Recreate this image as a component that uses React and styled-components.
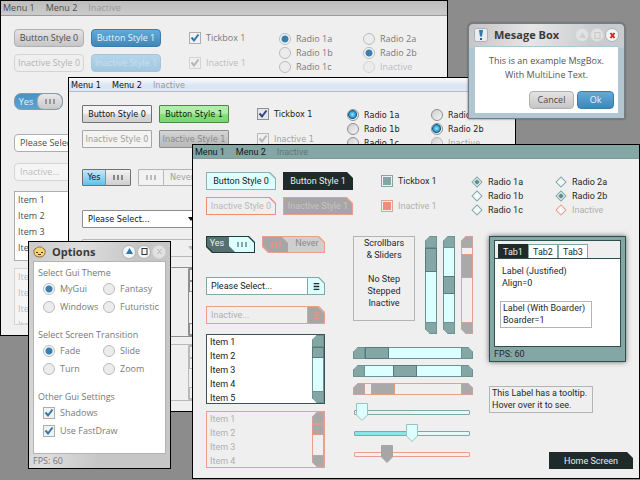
import React from "react";
import styled, { createGlobalStyle, css, ThemeProvider } from "styled-components";

const GlobalStyle = createGlobalStyle`
  *, *::before, *::after { box-sizing: border-box; }
  body { margin: 0; background: #8c8c8c; }
  button, input, select { font: inherit; color: inherit; margin: 0; padding: 0; }
  ul { list-style: none; margin: 0; padding: 0; }
  p { margin: 0; }
`;

/* ---------- themes ---------- */

const myGui = {
  name: "mygui",
  font: '"Open Sans", "Noto Sans", sans-serif',
  radius: "4px",
  rowHeight: "16px",
  menuHeight: "15px",
  menu: "linear-gradient(#bdbdbd, #cbcbcb)",
  menuLine: "#9b9b9b",
  menuText: "#4c4c4c",
  page: "#efefef",
  text: "#7a7a7a",
  strong: "#4c4c4c",
  muted: "#bdbdbd",
  menuMuted: "#999",
  line: "#adadad",
  mutedLine: "#d4d4d4",
  button: { fill: "linear-gradient(#e4e4e4, #c6c6c6)", line: "#b0b0b0", text: "#4c4c4c" },
  buttonOff: { fill: "#efefef", line: "#d4d4d4", text: "#b4b4b4" },
  accent: { fill: "linear-gradient(#62aad8, #3f87ba)", line: "#3b7cab", text: "#e8f4fc" },
  accentOff: { fill: "linear-gradient(#b4d5ea, #a2c8e0)", line: "#a4c6dc", text: "#c8dfee" },
  toggle: { fill: "linear-gradient(#4b92c4, #5aa3d3)", line: "#8c9aa4", text: "#e8f4fc" },
  knob: { fill: "linear-gradient(#e8e8e8, #c9c9c9)", grip: "#999" },
  toggleOff: { fill: "#efefef", line: "#d4d4d4", text: "#bdbdbd" },
  knobOff: { fill: "#efefef", grip: "#ccc" },
  mark: "#2f78ab",
  tickFill: "#f2f2f2",
  radioFill: "#ececec",
  radioOn: "radial-gradient(circle, #3a80ad 0 3px, #f4f7fa 4px)",
  radioLine: "#b7bcc0",
  bar: "#c9c9c9",
  track: "#efefef",
  list: "#fff",
  listOff: "#f5f5f5",
};

const windowsGui = {
  ...myGui,
  name: "windows",
  font: '"DejaVu Sans Condensed", "Noto Sans", sans-serif',
  radius: "1px",
  menuHeight: "14px",
  menu: "linear-gradient(#fbfcfe, #dbe4f3 60%, #dfe8f5)",
  menuLine: "#b4bccb",
  menuText: "#111",
  text: "#222",
  strong: "#111",
  muted: "#a3a3a3",
  line: "#8e8e8e",
  mutedLine: "#b9b9b9",
  button: { fill: "linear-gradient(#f4f4f4 45%, #dadada 55%, #d0d0d0)", line: "#707070", text: "#111" },
  buttonOff: { fill: "#f3f3f3", line: "#a5a5a5", text: "#a0a0a0" },
  accent: { fill: "linear-gradient(#b0ecaa 45%, #83df7c 55%, #78d871)", line: "#4d8749", text: "#102010" },
  accentOff: { fill: "linear-gradient(#d4d4d4, #b8b8b8)", line: "#8e8e8e", text: "#8a8a8a" },
  toggle: { fill: "linear-gradient(#c3e9f9, #65bfe8)", line: "#707070", text: "#111" },
  knob: { fill: "linear-gradient(#f2f2f2, #cfcfcf)", grip: "#888" },
  toggleOff: { fill: "#f0f0f0", line: "#b4b4b4", text: "#a0a0a0" },
  knobOff: { fill: "#f2f2f2", grip: "#bbb" },
  mark: "#34427c",
  tickFill: "#e4e6ee",
  radioFill: "linear-gradient(135deg, #cfcfcf, #f4f4f4)",
  radioOn: "radial-gradient(circle at 45% 45%, #9fe0fb 0, #2aa0d8 3px, #14547c 4px, #eef2f5 5px)",
  radioLine: "#8e8f8f",
  bar: "#efefef",
  list: "#efefef",
  listOff: "#efefef",
};

const futuristic = {
  name: "futuristic",
  cut: true,
  font: 'Roboto, "Liberation Sans", sans-serif',
  radius: "0",
  rowHeight: "14px",
  menuHeight: "14px",
  menu: "#84a7a5",
  menuLine: "#7d9d9b",
  menuText: "#101818",
  page: "#efefef",
  text: "#222a2a",
  strong: "#151c1c",
  muted: "#b0b0b0",
  menuMuted: "#5f7877",
  line: "#84a7a5",
  mutedLine: "#eb9f8b",
  button: { fill: "#dcffff", line: "#8fb0ae", text: "#151c1c" },
  buttonOff: { fill: "#efefef", line: "#eb8f78", text: "#b9b9b9" },
  accent: { fill: "#1f2a2a", line: "#1f2a2a", text: "#e4eeee" },
  accentOff: { fill: "#a6a6a6", line: "#eb9f8b", text: "#c8c2c0" },
  toggle: { fill: "#55706f", line: "#1f3a3a", text: "#e0f4f4" },
  knob: { fill: "#dcffff", grip: "#84a7a5" },
  toggleOff: { fill: "#cfcfcf", line: "#eb9f8b", text: "#8a8a8a" },
  knobOff: { fill: "#a6a6a6", grip: "#e89480" },
  mark: "#84a7a5",
  tickFill: "#dcffff",
  radioFill: "#f2fafa",
  radioOn: "linear-gradient(#5f8b89, #5f8b89) center / 4px 4px no-repeat, #e4f6f6",
  radioLine: "#84a7a5",
  bar: "#84a7a5",
  track: "#dcffff",
  list: "#fff",
  listOff: "#efefef",
};

/* Octagon outline whose four corners can each be bevelled by a given size. */
const bevel = ([tl, tr, br, bl]) =>
  `polygon(${tl}px 0, calc(100% - ${tr}px) 0, 100% ${tr}px, 100% calc(100% - ${br}px),
   calc(100% - ${br}px) 100%, ${bl}px 100%, 0 calc(100% - ${bl}px), 0 ${tl}px)`;

/* Bordered surface: rounded in the soft themes, bevelled in the futuristic one. */
const surface = ({ fill, line }, theme, corners = [0, 6, 0, 0]) =>
  theme.cut
    ? css`
        border: 0;
        position: relative;
        isolation: isolate;
        background: ${line};
        clip-path: ${bevel(corners)};
        &::before {
          content: "";
          position: absolute;
          inset: 1px;
          z-index: -1;
          background: ${fill};
          clip-path: ${bevel(corners)};
        }
      `
    : css`
        border: 1px solid ${line};
        border-radius: ${theme.radius};
        background: ${fill};
      `;

/* ---------- desktop and windows ---------- */

const Desktop = styled.main`
  position: relative;
  min-height: 100vh;
  overflow: hidden;
  background: #8c8c8c;
`;

const Placed = styled.section`
  position: absolute;
  left: ${(p) => p.$x}px;
  top: ${(p) => p.$y}px;
`;

const Screen = styled(Placed)`
  width: 448px;
  border: 1px solid #000;
  background: ${(p) => p.theme.page};
  color: ${(p) => p.theme.text};
  font: 9px/14px ${(p) => p.theme.font};
`;

const MenuBar = styled.nav`
  display: flex;
  align-items: center;
  gap: 11px;
  height: ${(p) => p.theme.menuHeight};
  padding: 0 2px;
  background: ${(p) => p.theme.menu};
  border-bottom: 1px solid ${(p) => p.theme.menuLine};
`;

const MenuItem = styled.button`
  border: 0;
  background: none;
  line-height: 12px;
  color: ${(p) => p.theme.menuText};
  &:disabled { color: ${(p) => p.theme.menuMuted}; }
`;

const Page = styled.div`
  padding: 13px 6px 9px 13px;
`;

const Choices = styled.div`
  display: flex;
  gap: 28px;
  margin-bottom: 19px;
`;

const ButtonGrid = styled.div`
  display: grid;
  grid-template-columns: 70px 70px;
  grid-auto-rows: 18px;
  gap: 7px;
`;

const TickColumn = styled.div`
  display: grid;
  grid-auto-rows: 18px;
  gap: 7px;
  width: 63px;
  white-space: nowrap;
`;

const RadioColumns = styled.div`
  display: grid;
  grid-template-columns: 84px 78px;
  grid-template-rows: repeat(3, 14px);
  grid-auto-flow: column;
  padding-top: 3px;
`;

const Button = styled.button`
  ${(p) => surface(p.theme[p.$kind || "button"], p.theme)}
  color: ${(p) => p.theme[p.$kind || "button"].text};
  white-space: nowrap;
  line-height: 14px;
  text-align: center;
`;

const Field = styled.label`
  display: flex;
  align-items: center;
  gap: 5px;
  color: ${(p) => (p.$off ? p.theme.muted : p.theme.text)};
`;

const drawing = (width, height, shape) =>
  `url("data:image/svg+xml,${encodeURIComponent(
    `<svg xmlns='http://www.w3.org/2000/svg' viewBox='0 0 ${width} ${height}'>${shape}</svg>`
  )}")`;

const tickMark = (colour) =>
  drawing(12, 12, `<path d='M2.5 5.5 5 8.5 9.5 2.5' fill='none' stroke='${colour}' stroke-width='2'/>`);

const thumb = (fill, line) =>
  drawing(12, 18, `<path d='M.5 .5h11v11.500l-5.500 5.500-5.500-5.500z' fill='${fill}' stroke='${line}'/>`);

const Tick = styled.input.attrs({ type: "checkbox" })`
  appearance: none;
  flex: none;
  width: 12px;
  height: 12px;
  border: 1px solid ${(p) => (p.disabled ? p.theme.mutedLine : p.theme.line)};
  background: ${(p) => p.theme.tickFill};
  &:checked {
    ${(p) =>
      p.theme.cut
        ? css`
            background: ${p.disabled ? "#ec8f78" : p.theme.mark} content-box;
            padding: 1px;
          `
        : css`
            background: ${tickMark(p.disabled ? "#b5b5b5" : p.theme.mark)} center / 12px 12px no-repeat
              ${p.disabled ? "#efefef" : p.theme.tickFill};
          `}
  }
`;

const Radio = styled.input.attrs({ type: "radio" })`
  appearance: none;
  flex: none;
  width: 12px;
  height: 12px;
  border: 1px solid ${(p) => (p.disabled ? p.theme.mutedLine : p.theme.radioLine)};
  border-radius: 50%;
  background: ${(p) => p.theme.radioFill};
  &:checked { background: ${(p) => p.theme.radioOn}; }
  ${(p) =>
    p.theme.cut &&
    css`
      width: 8px;
      height: 8px;
      margin: 2px;
      border-radius: 0;
      transform: rotate(45deg);
    `}
`;

/* ---------- lower half of a screen ---------- */

const Lower = styled.div`
  display: flex;
  align-items: flex-start;
`;

const Inputs = styled.div`
  display: flex;
  flex-direction: column;
  width: 119px;
  margin-right: 28px;
  padding-bottom: 1px;
`;

const Toggles = styled.div`
  display: flex;
  gap: 7px;
  margin-bottom: 24px;
`;

const Toggle = styled.button`
  display: flex;
  align-items: stretch;
  width: ${(p) => (p.$left ? 63 : 49)}px;
  height: 17px;
  ${(p) => surface(p.theme[p.$left ? "toggleOff" : "toggle"], p.theme, [0, 6, 0, 6])}
  ${(p) => p.theme.name === "mygui" && "border-radius: 7px; overflow: hidden;"}
  color: ${(p) => p.theme[p.$left ? "toggleOff" : "toggle"].text};
  > span { flex: 1; text-align: center; line-height: 15px; }
`;

const Knob = styled.i`
  display: flex;
  justify-content: center;
  align-items: center;
  gap: 2px;
  width: 25px;
  background: ${(p) => p.theme[p.$off ? "knobOff" : "knob"].fill};
  ${(p) =>
    p.theme.cut
      ? css`
          margin: 1px;
          clip-path: ${bevel([0, 6, 0, 6])};
        `
      : css`
          border: 0 solid ${p.$off ? p.theme.mutedLine : p.theme.line};
          border-width: ${p.$off ? "0 1px 0 0" : "0 0 0 1px"};
          border-radius: ${p.theme.name === "mygui" ? "6px" : "0"};
        `}
  &::before, &::after, b {
    content: "";
    width: 2px;
    height: 5px;
    background: ${(p) => p.theme[p.$off ? "knobOff" : "knob"].grip};
  }
`;

const Picker = styled.div`
  display: flex;
  align-items: stretch;
  height: 18px;
  margin-bottom: ${(p) => (p.$off ? 10 : 11)}px;
  ${(p) =>
    surface(
      { fill: p.$off ? p.theme.listOff : "#fff", line: p.$off ? p.theme.mutedLine : p.theme.line },
      p.theme
    )}
  color: ${(p) => (p.$off ? p.theme.muted : p.theme.strong)};
  > select {
    appearance: none;
    flex: 1;
    min-width: 0;
    border: 0;
    padding: 0 5px;
    background: none;
    color: inherit;
    opacity: 1;
  }
  > svg {
    width: 17px;
    height: 16px;
    ${(p) =>
      p.theme.cut &&
      css`
        margin: 1px;
        border-left: 1px solid ${p.$off ? p.theme.mutedLine : p.theme.line};
        background: ${p.$off ? "#a6a6a6" : p.theme.track};
        clip-path: ${bevel([0, 6, 0, 0])};
      `}
  }
`;

const ListBox = styled.div`
  display: flex;
  height: ${(p) => (p.$off ? 57 : 70)}px;
  margin-bottom: ${(p) => (p.$off ? 0 : 7)}px;
  overflow: hidden;
  border: 1px solid ${(p) => (p.$off ? p.theme.mutedLine : p.theme.cut ? "#3c5554" : p.theme.line)};
  background: ${(p) => (p.$off ? p.theme.listOff : p.theme.list)};
  color: ${(p) => (p.$off ? p.theme.muted : p.theme.strong)};
  ul { flex: 1; padding-left: 3px; }
  li { line-height: ${(p) => p.theme.rowHeight}; }
`;

/* Scroll bar: end caps with one bevelled corner, a track and a handle. */
const Bar = styled.div`
  display: flex;
  flex-direction: ${(p) => (p.$across ? "row" : "column")};
  flex: none;
  ${(p) => (p.$across ? "height: 12px;" : "width: 12px;")}
  ${(p) => p.$length && `${p.$across ? "width" : "height"}: ${p.$length}px;`}
  ${(p) =>
    surface(
      { fill: p.$off ? p.theme.page : p.theme.track, line: p.$off ? p.theme.mutedLine : p.theme.cut ? "#6d9391" : p.theme.line },
      p.theme,
      p.$across ? [5, 5, 0, 0] : [5, 0, 0, 5]
    )}
`;

const Cap = styled.div`
  flex: none;
  width: 12px;
  height: 12px;
  background: ${(p) => (p.$off && p.theme.cut ? "#a9a9a9" : p.theme.bar)};
  border: 1px solid ${(p) => (p.theme.cut ? (p.$off ? "#c9a49b" : "#6d9391") : p.$off ? p.theme.mutedLine : p.theme.line)};
`;

const Handle = styled(Cap)`
  ${(p) => (p.$across ? "width" : "height")}: ${(p) => p.$size}px;
  border-color: ${(p) => (p.theme.cut ? (p.$off ? "#e39a87" : "#557a78") : p.$off ? p.theme.mutedLine : p.theme.line)};
`;

const Space = styled.div`
  flex: ${(p) => p.$grow} 1 0;
`;

const Controls = styled.div`
  width: 120px;
  margin-right: 16px;
`;

const Uprights = styled.div`
  display: flex;
  align-items: flex-start;
  gap: 6px;
  margin-bottom: 13px;
`;

const Caption = styled.p`
  width: 63px;
  height: 85px;
  margin-right: 4px;
  border: 1px solid #b4b4b4;
  text-align: center;
  line-height: 12px;
  white-space: pre-line;
`;

const Stack = styled.div`
  display: flex;
  flex-direction: column;
  gap: ${(p) => p.$gap}px;
  & + & { margin-top: 8px; }
`;

const Slider = styled.input.attrs({ type: "range" })`
  appearance: none;
  width: 116px;
  height: 18px;
  margin: 0 1px;
  background: none;
  &::-webkit-slider-runnable-track {
    height: 5px;
    border: 1px solid ${(p) => (p.disabled ? p.theme.mutedLine : p.theme.line)};
    border-radius: 1px;
    background: linear-gradient(
      90deg,
      ${(p) => (p.$fill ? "#84e8ea" : "transparent")} 50%,
      ${(p) => (p.disabled ? "#fbeae5" : "#e6f8f8")} 50%
    );
  }
  &::-webkit-slider-thumb {
    appearance: none;
    width: 12px;
    height: 18px;
    margin-top: -8px;
    border: 0;
    background: ${(p) => (p.disabled ? thumb("#a6a6a6", "#a6a6a6") : thumb("#dcffff", "#9dbfbd"))};
  }
`;

const Aside = styled.div`
  display: flex;
  flex-direction: column;
  flex: 1;
  min-width: 0;
`;

const TabWindow = styled.div`
  margin: 0 7px 24px 0;
  padding: 3px 4px 0;
  border: 1px solid #2f4f4e;
  background: #84a7a5;
  box-shadow: 0 0 5px #666;
`;

const TabBody = styled.div`
  height: 107px;
  border: 1px solid #2f4f4e;
  background: #fff;
`;

const TabRow = styled.div`
  display: flex;
  padding: 3px 3px 0;
  background: #efefef;
  border-bottom: 1px solid #2f4f4e;
`;

const Tab = styled.button`
  width: 30px;
  height: 14px;
  border: 1px solid ${(p) => (p.$on ? "#1f2a2a" : "#84a7a5")};
  border-width: 1px 1px 0;
  background: ${(p) => (p.$on ? "#1f2a2a" : "#fff")};
  color: ${(p) => (p.$on ? "#e4eeee" : "inherit")};
  line-height: 12px;
`;

const TabContent = styled.div`
  padding: 6px 5px;
`;

const Note = styled.p`
  line-height: 12px;
  white-space: pre-line;
  padding: 0 2px;
  ${(p) =>
    p.$framed &&
    css`
      width: fit-content;
      min-width: 92px;
      border: 1px solid #b4b4b4;
      height: 27px;
    `}
  & + & { margin-top: 12px; }
`;

const TooltipNote = styled(Note)`
  min-width: 104px;
  white-space: pre;
`;

const Status = styled.footer`
  height: 14px;
  line-height: 14px;
`;

const HomeButton = styled(Button)`
  align-self: flex-end;
  width: 84px;
  height: 17px;
  margin-top: 39px;
`;

/* ---------- floating dialogs ---------- */

const Options = styled(Placed)`
  width: 143px;
  padding: 0 4px;
  border: 1px solid #000;
  background: linear-gradient(100deg, #c9c9c9, #dedede 30%, #c6c6c6 60%);
  color: #777;
  font: 9px/14px ${myGui.font};
`;

const TitleBar = styled.header`
  display: flex;
  align-items: center;
  gap: 6px;
  height: ${(p) => p.$height}px;
  h2 {
    flex: 1;
    margin: 0;
    color: #3a3a3a;
    font-size: 11px;
    line-height: 14px;
    font-weight: 700;
  }
  > svg { flex: none; }
`;

const Rounds = styled.div`
  display: flex;
  gap: 1px;
`;

const RoundButton = styled.button`
  display: grid;
  place-items: center;
  width: 14px;
  height: 14px;
  border: 1px solid ${(p) => (p.disabled ? "#d4d4d4" : "#aeb4b8")};
  border-radius: 50%;
  background: ${(p) => (p.disabled ? "#e2e2e2" : "#f4f4f4")};
  svg { width: 9px; height: 9px; }
`;

const OptionBody = styled.div`
  display: flex;
  flex-direction: column;
  gap: 12px;
  height: 193px;
  padding: 4px;
  border: 1px solid #b4b4b4;
  background: #fff;
`;

const Group = styled.fieldset`
  display: grid;
  grid-template-columns: 60px 1fr;
  grid-auto-rows: 18px;
  margin: 0;
  padding: 0 0 0 5px;
  border: 0;
  white-space: nowrap;
  legend {
    height: 14px;
    margin-left: -5px;
    padding: 0;
  }
`;

const Wide = styled(Field)`
  grid-column: 1 / -1;
`;

const Message = styled(Placed)`
  width: 157px;
  padding: 0 5px 4px;
  border: 1px solid #6d7f88;
  border-radius: 5px 5px 0 0;
  background: linear-gradient(100deg, #c4c4c4, #e6e6e6 40%, #c8ccce 80%) top / 100% 24px no-repeat, #b3c5ce;
  box-shadow: 0 0 2px #444;
  color: #555;
  font: 9px/14px ${myGui.font};
`;

const MessageBody = styled.div`
  padding: 7px 4px 4px;
  border: 1px solid #a9c8d8;
  background: #fff;
  text-align: center;
  p { white-space: pre-line; }
`;

const Answers = styled.div`
  display: flex;
  justify-content: flex-end;
  gap: 3px;
  margin-top: 9px;
`;

const Answer = styled(Button)`
  width: ${(p) => p.$width}px;
  height: 18px;
`;

/* ---------- parts ---------- */

const PickerIcon = ({ theme, off }) => {
  const colour = off ? (theme.cut ? "#e89480" : "#bbb") : theme.cut ? "#1f2a2a" : "#111";
  return (
    <svg viewBox="0 0 17 16" aria-hidden="true">
      {theme.cut ? (
        <path d="M6 5.500h6M6 8.500h6M6 11.500h6" stroke={colour} strokeWidth="1.4" />
      ) : (
        <path d="M5 6h6l-3 4z" fill={colour} />
      )}
    </svg>
  );
};

const ScrollBar = ({ across, length, before, size, after, off }) => (
  <Bar $across={across} $length={length} $off={off}>
    <Cap $off={off} />
    <Space $grow={before} />
    <Handle $across={across} $size={size} $off={off} />
    <Space $grow={after} />
    <Cap $off={off} />
  </Bar>
);

const Choice = ({ group, label, on, off }) => (
  <Field $off={off}>
    <Radio name={group} defaultChecked={on} disabled={off} />
    {label}
  </Field>
);

const List = ({ items, off }) => (
  <ListBox $off={off}>
    <ul>
      {items.map((item) => (
        <li key={item}>{item}</li>
      ))}
    </ul>
    <ScrollBar before={0} size={11} after={1} off={off} />
  </ListBox>
);

const RollGlyph = ({ colour }) => (
  <svg viewBox="0 0 9 9">
    <path d="M4.500 1 8 7H1z" fill={colour} />
  </svg>
);
const SquareGlyph = ({ colour }) => (
  <svg viewBox="0 0 9 9">
    <rect x="2" y="1.5" width="5" height="6" fill="none" stroke={colour} />
  </svg>
);
const CrossGlyph = ({ colour, weight = 1 }) => (
  <svg viewBox="0 0 9 9">
    <path d="M2.500 2 6.500 7M6.500 2 2.500 7" stroke={colour} strokeWidth={weight} />
  </svg>
);

const Showcase = ({ theme, x, y, never, items = [], offItems = [], children }) => (
  <ThemeProvider theme={theme}>
    <Screen $x={x} $y={y}>
      <MenuBar>
        <MenuItem>Menu 1</MenuItem>
        <MenuItem>Menu 2</MenuItem>
        <MenuItem disabled>Inactive</MenuItem>
      </MenuBar>
      <Page>
        <Choices>
          <ButtonGrid>
            <Button>Button Style 0</Button>
            <Button $kind="accent">Button Style 1</Button>
            <Button $kind="buttonOff" disabled>Inactive Style 0</Button>
            <Button $kind="accentOff" disabled>Inactive Style 1</Button>
          </ButtonGrid>
          <TickColumn>
            <Field><Tick defaultChecked />Tickbox 1</Field>
            <Field $off><Tick defaultChecked disabled />Inactive 1</Field>
          </TickColumn>
          <RadioColumns>
            <Choice group={`${theme.name}-1`} label="Radio 1a" on />
            <Choice group={`${theme.name}-1`} label="Radio 1b" />
            <Choice group={`${theme.name}-1`} label="Radio 1c" />
            <Choice group={`${theme.name}-2`} label="Radio 2a" />
            <Choice group={`${theme.name}-2`} label="Radio 2b" on />
            <Choice group={`${theme.name}-2`} label="Inactive" off />
          </RadioColumns>
        </Choices>
        <Lower>
          <Inputs>
            <Toggles>
              <Toggle><span>Yes</span><Knob><b /></Knob></Toggle>
              {never && (
                <Toggle $left disabled>
                  <Knob $off><b /></Knob>
                  <span>Never</span>
                </Toggle>
              )}
            </Toggles>
            <Picker>
              <select aria-label="Selection"><option>Please Select...</option></select>
              <PickerIcon theme={theme} />
            </Picker>
            <Picker $off>
              <select aria-label="Inactive selection" disabled><option>Inactive...</option></select>
              <PickerIcon theme={theme} off />
            </Picker>
            <List items={items} />
            <List items={offItems} off />
          </Inputs>
          {children}
        </Lower>
      </Page>
    </Screen>
  </ThemeProvider>
);

const numbered = (count) => Array.from({ length: count }, (_, i) => `Item ${i + 1}`);

export default function App() {
  return (
    <Desktop>
      <GlobalStyle />
      <Showcase theme={myGui} x={0} y={0} items={numbered(4)} offItems={numbered(4)} />
      <Showcase theme={windowsGui} x={68} y={77} never />

      <ThemeProvider theme={myGui}>
        <Options $x={28} $y={241} aria-label="Options">
          <TitleBar $height={19}>
            <svg width="13" height="12" viewBox="0 0 13 12" aria-hidden="true">
              <path d="M3 2.500C4 .5 9 .5 10 2.500c2 .5 2.500 2.500 2 4C12 9.500 9.500 11 6.500 11S1 9.500 1 6.500c-.5-1.500 0-3.500 2-4z" fill="#f3d478" stroke="#8a6a2a" />
              <path d="M3 6.500h2M8 6.500h2M5 8.500h3" stroke="#4a3410" />
            </svg>
            <h2>Options</h2>
            <Rounds>
              <RoundButton aria-label="Roll up"><RollGlyph colour="#2f78ab" /></RoundButton>
              <RoundButton aria-label="Maximise"><SquareGlyph colour="#333" /></RoundButton>
              <RoundButton aria-label="Close" disabled><CrossGlyph colour="#b4b4b4" /></RoundButton>
            </Rounds>
          </TitleBar>
          <OptionBody>
            <Group>
              <legend>Select Gui Theme</legend>
              <Choice group="theme" label="MyGui" on />
              <Choice group="theme" label="Fantasy" />
              <Choice group="theme" label="Windows" />
              <Choice group="theme" label="Futuristic" />
            </Group>
            <Group>
              <legend>Select Screen Transition</legend>
              <Choice group="transition" label="Fade" on />
              <Choice group="transition" label="Slide" />
              <Choice group="transition" label="Turn" />
              <Choice group="transition" label="Zoom" />
            </Group>
            <Group>
              <legend>Other Gui Settings</legend>
              <Wide><Tick defaultChecked />Shadows</Wide>
              <Wide><Tick defaultChecked />Use FastDraw</Wide>
            </Group>
          </OptionBody>
          <Status>FPS: 60</Status>
        </Options>

        <Message $x={468} $y={23} aria-label="Mesage Box">
          <TitleBar $height={22}>
            <svg width="14" height="14" viewBox="0 0 14 14" aria-hidden="true">
              <rect x=".5" y=".5" width="13" height="13" rx="2" fill="#e9edf0" stroke="#a9b0b4" />
              <path d="M5 2h4L8 8.500H6z" fill="#2f78ab" />
              <rect x="6" y="10" width="2" height="2" fill="#2a5a8a" />
            </svg>
            <h2>Mesage Box</h2>
            <Rounds>
              <RoundButton aria-label="Roll up" disabled><RollGlyph colour="#cfcfcf" /></RoundButton>
              <RoundButton aria-label="Maximise" disabled><SquareGlyph colour="#c8c8c8" /></RoundButton>
              <RoundButton aria-label="Close"><CrossGlyph colour="#e02020" weight={2} /></RoundButton>
            </Rounds>
          </TitleBar>
          <MessageBody>
            <p>{"This is an example MsgBox.\nWith MultiLine Text."}</p>
            <Answers>
              <Answer $width={45}>Cancel</Answer>
              <Answer $width={37} $kind="accent">Ok</Answer>
            </Answers>
          </MessageBody>
        </Message>
      </ThemeProvider>

      <Showcase theme={futuristic} x={192} y={144} never items={numbered(5)} offItems={numbered(4)}>
        <Controls>
          <Uprights>
            <Caption>{"Scrollbars\n& Sliders\n\nNo Step\nStepped\nInactive"}</Caption>
            <ScrollBar length={98} before={0} size={24} after={1} />
            <ScrollBar length={98} before={28} size={18} after={28} />
            <ScrollBar length={98} before={6} size={24} after={44} off />
          </Uprights>
          <Stack $gap={6}>
            <ScrollBar across length={120} before={0} size={24} after={1} />
            <ScrollBar across length={120} before={28} size={24} after={44} />
            <ScrollBar across length={120} before={6} size={24} after={66} off />
          </Stack>
          <Stack $gap={3}>
            <Slider aria-label="No step" defaultValue={1} />
            <Slider aria-label="Stepped" defaultValue={50} $fill />
            <Slider aria-label="Inactive" defaultValue={25} disabled />
          </Stack>
        </Controls>
        <Aside>
          <TabWindow>
            <TabBody>
              <TabRow role="tablist">
                <Tab role="tab" aria-selected="true" $on>Tab1</Tab>
                <Tab role="tab">Tab2</Tab>
                <Tab role="tab">Tab3</Tab>
              </TabRow>
              <TabContent>
                <Note>{"Label (Justified)\nAlign=0"}</Note>
                <Note $framed>{"Label (With Boarder)\nBoarder=1"}</Note>
              </TabContent>
            </TabBody>
            <Status>FPS: 60</Status>
          </TabWindow>
          <TooltipNote $framed>{"This Label has a tooltip.\nHover over it to see."}</TooltipNote>
          <HomeButton $kind="accent">Home Screen</HomeButton>
        </Aside>
      </Showcase>
    </Desktop>
  );
}
